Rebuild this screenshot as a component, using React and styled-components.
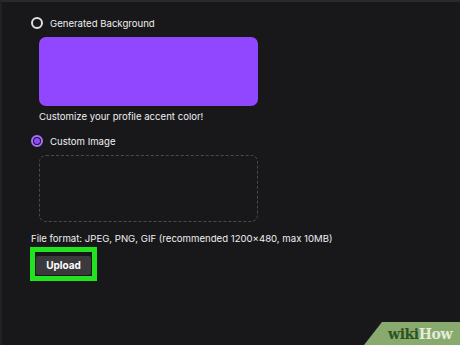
import React from 'react';
import styled, { createGlobalStyle } from 'styled-components';

const Global = createGlobalStyle`
  html, body { margin: 0; padding: 0; background: #18181b; }
  body { font-family: Inter, "Noto Sans", sans-serif; color: #efeff1; }
`;

const Frame = styled.div`
  position: relative;
  width: 460px;
  height: 345px;
  box-sizing: border-box;
  border-top: 2px solid #2a2a2d;
  border-left: 2px solid #222225;
  background: #18181b;
  overflow: hidden;
`;

const Content = styled.div`
  display: flex;
  flex-direction: column;
  padding: 14px 0 0 29px;
`;

const RadioRow = styled.label`
  display: flex;
  align-items: center;
  gap: 7px;
  height: 14px;
  font-size: 9.6px;
  color: #efeff1;
`;

const Radio = styled.span`
  width: 12px;
  height: 12px;
  box-sizing: border-box;
  border-radius: 50%;
  border: 2px solid ${p => (p.$checked ? '#a970ff' : '#dedee3')};
  display: flex;
  align-items: center;
  justify-content: center;
  &::after {
    content: '';
    width: 6px;
    height: 6px;
    border-radius: 50%;
    background: ${p => (p.$checked ? '#9147ff' : 'transparent')};
  }
`;

const Indent = styled.div`
  margin-left: 8px;
  display: flex;
  flex-direction: column;
`;

const Swatch = styled.div`
  width: 219px;
  height: 69px;
  border-radius: 7px;
  background: #9147ff;
  margin-top: 7px;
`;

const Hint = styled.div`
  font-size: 9.6px;
  margin-top: 5px;
  margin-bottom: 12px;
  color: #efeff1;
`;

const DropZone = styled.div`
  width: 219px;
  height: 67px;
  box-sizing: border-box;
  border: 1.5px dashed #4a4a4e;
  border-radius: 7px;
  margin-top: 7px;
`;

const Format = styled.div`
  font-size: 9.6px;
  margin-top: 11px;
  color: #efeff1;
`;

const Highlight = styled.div`
  align-self: flex-start;
  margin-top: 3px;
  margin-left: -1px;
  border: 5px solid #22e31f;
  padding: 1px;
  background: #18181b;
`;

const UploadButton = styled.button`
  border: none;
  background: #3a3a3d;
  color: #ffffff;
  font-family: Inter, "Noto Sans", sans-serif;
  font-weight: 700;
  font-size: 10px;
  width: 55px;
  height: 19px;
  padding: 0;
  border-radius: 2px;
`;

const Watermark = styled.div`
  position: absolute;
  right: 0;
  bottom: 0;
  width: 96px;
  height: 23px;
  background: #88aa6e;
  clip-path: polygon(18px 0, 100% 0, 100% 100%, 0 100%);
  display: flex;
  align-items: center;
  padding-left: 24px;
  box-sizing: border-box;
  font-family: "DejaVu Serif", "Liberation Serif", serif;
  font-weight: 700;
  font-size: 14px;
  letter-spacing: -0.4px;
`;

const Wiki = styled.span`
  color: #2f5222;
`;

const How = styled.span`
  color: #e3ecd9;
`;

export default function App() {
  return (
    <Frame>
      <Global />
      <Content>
        <RadioRow>
          <Radio />
          Generated Background
        </RadioRow>
        <Indent>
          <Swatch />
          <Hint>Customize your profile accent color!</Hint>
        </Indent>
        <RadioRow>
          <Radio $checked />
          Custom Image
        </RadioRow>
        <Indent>
          <DropZone />
        </Indent>
        <Format>File format: JPEG, PNG, GIF (recommended 1200×480, max 10MB)</Format>
        <Highlight>
          <UploadButton>Upload</UploadButton>
        </Highlight>
      </Content>
      <Watermark>
        <Wiki>wiki</Wiki>
        <How>How</How>
      </Watermark>
    </Frame>
  );
}
